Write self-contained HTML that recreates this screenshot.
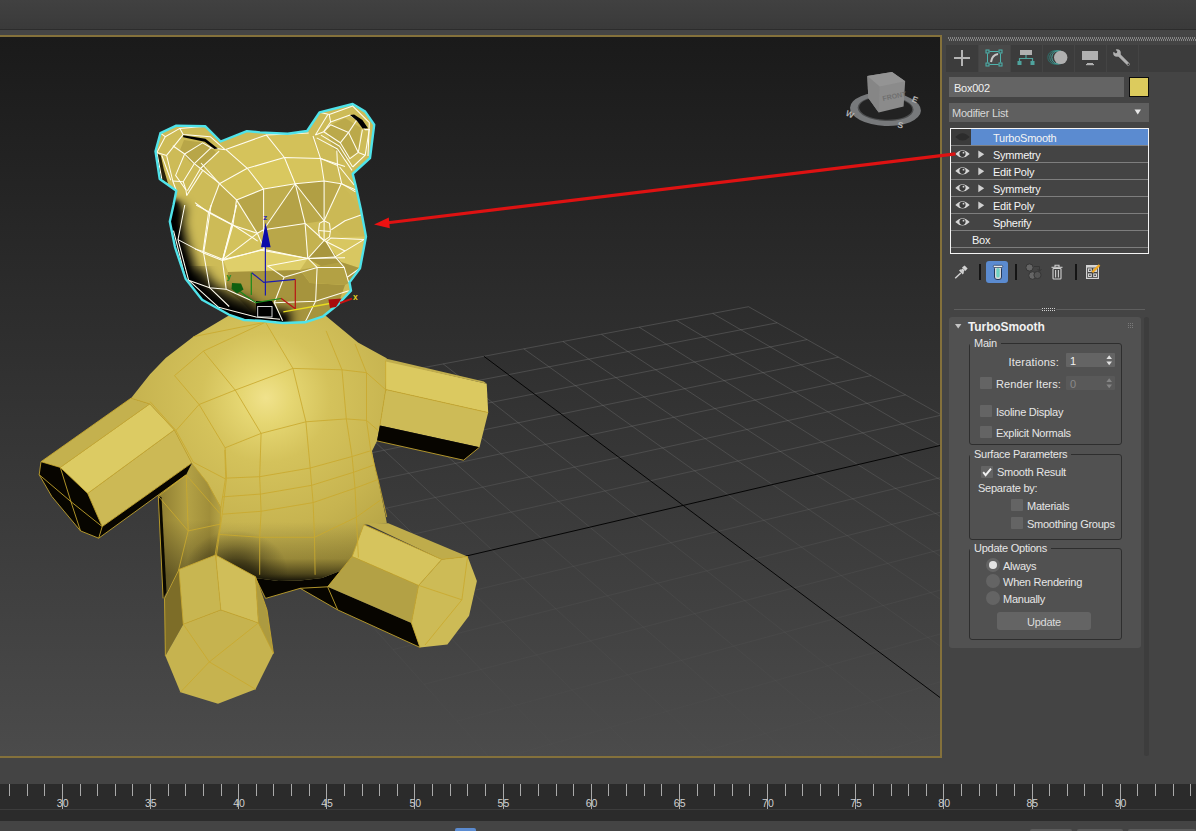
<!DOCTYPE html>
<html><head><meta charset="utf-8"><title>3ds Max</title>
<style>
html,body{margin:0;padding:0;overflow:hidden}
body{width:1196px;height:831px;overflow:hidden;background:#444444;position:relative;font-family:"Liberation Sans",sans-serif;font-size:11px;color:#e6e6e6}
.a{position:absolute}

.t{position:absolute;white-space:nowrap;line-height:13px;height:13px;margin-top:1px;letter-spacing:-0.25px}
.cb{position:absolute;width:12px;height:12px;background:#646464;border-radius:1px}
.rb{position:absolute;width:14px;height:14px;background:#646464;border-radius:7px}
.gb{position:absolute;border:1px solid #2e2e2e;border-radius:3px;box-sizing:border-box}
.gl{position:absolute;background:#515151;padding:0 4px 0 4px;line-height:13px;height:13px;white-space:nowrap;margin-top:1px;letter-spacing:-0.25px}
.row{position:absolute;left:951px;width:197px;height:16px;border-bottom:1px solid #7c7c7c}
.sep{position:absolute;width:1.5px;height:16px;background:#141414}

</style></head><body>
<div class="a" style="left:0;top:0;width:1196px;height:29px;background:linear-gradient(#414141,#3a3a3a)"></div>
<div class="a" style="left:0;top:29px;width:1196px;height:1px;background:#2c2c2c"></div>
<div class="a" style="left:0;top:30px;width:1196px;height:5px;background:#454545"></div>
<div class="a" style="left:0;top:35px;width:942px;height:723px;background:#84713b"></div>
<svg class="a" style="left:0;top:37px" width="940" height="719" viewBox="0 37 940 719">
<defs>
<linearGradient id="vbg" x1="0" y1="0" x2="0" y2="1"><stop offset="0" stop-color="#1a1a1a"/><stop offset="1" stop-color="#4b4b4b"/></linearGradient>
<linearGradient id="gridfade" gradientUnits="userSpaceOnUse" x1="0" y1="300" x2="0" y2="720"><stop offset="0" stop-color="#8a8a8a" stop-opacity="0.33"/><stop offset="0.36" stop-color="#8a8a8a" stop-opacity="0.26"/><stop offset="0.62" stop-color="#8a8a8a" stop-opacity="0.11"/><stop offset="1" stop-color="#8a8a8a" stop-opacity="0.02"/></linearGradient>

<radialGradient id="torso" gradientUnits="userSpaceOnUse" cx="266" cy="398" r="215">
<stop offset="0" stop-color="#f0e28c"/><stop offset="0.12" stop-color="#e5d672"/><stop offset="0.3" stop-color="#d4c25b"/><stop offset="0.6" stop-color="#c7b450"/><stop offset="0.85" stop-color="#b5a345"/><stop offset="1" stop-color="#938236"/></radialGradient>
<linearGradient id="tshade" gradientUnits="userSpaceOnUse" x1="0" y1="522" x2="0" y2="583">
<stop offset="0" stop-color="#000" stop-opacity="0"/><stop offset="0.6" stop-color="#1a1400" stop-opacity="0.22"/><stop offset="0.85" stop-color="#0a0800" stop-opacity="0.6"/><stop offset="1" stop-color="#000" stop-opacity="0.97"/></linearGradient>
<linearGradient id="sideL" gradientUnits="userSpaceOnUse" x1="160" y1="0" x2="222" y2="0">
<stop offset="0" stop-color="#8f7e32"/><stop offset="0.45" stop-color="#b3a145"/><stop offset="0.8" stop-color="#a08e3a"/><stop offset="1" stop-color="#b8a648"/></linearGradient>
<linearGradient id="sideL2" gradientUnits="userSpaceOnUse" x1="0" y1="520" x2="0" y2="575">
<stop offset="0" stop-color="#000" stop-opacity="0"/><stop offset="1" stop-color="#000" stop-opacity="0.35"/></linearGradient>
<linearGradient id="headsh" gradientUnits="userSpaceOnUse" x1="232" y1="246" x2="196" y2="282">
<stop offset="0" stop-color="#000" stop-opacity="0"/><stop offset="0.45" stop-color="#000" stop-opacity="0.55"/><stop offset="0.75" stop-color="#000" stop-opacity="1"/><stop offset="1" stop-color="#000" stop-opacity="1"/></linearGradient>
<radialGradient id="legsh" gradientUnits="userSpaceOnUse" cx="236" cy="572" r="52" gradientTransform="translate(236 572) scale(1 0.8) translate(-236 -572)">
<stop offset="0" stop-color="#000" stop-opacity="0.62"/><stop offset="0.3" stop-color="#000" stop-opacity="0.5"/><stop offset="0.65" stop-color="#000" stop-opacity="0.22"/><stop offset="1" stop-color="#000" stop-opacity="0"/></radialGradient>
<filter id="blur5" x="-30%" y="-30%" width="160%" height="160%"><feGaussianBlur stdDeviation="5.5"/></filter><filter id="blur3" x="-30%" y="-30%" width="160%" height="160%"><feGaussianBlur stdDeviation="2.5"/></filter>
<clipPath id="headclip"><polygon points="160.4,133.2 176.3,125.6 205.4,126.3 220.6,141.5 246.9,131.1 260.0,132.4 287.7,133.8 307.1,131.0 319.5,112.3 352.7,104.0 365.2,111.6 374.2,124.8 370.0,158.0 352.7,173.9 355.5,185.0 361.0,210.0 366.0,236.6 360.0,268.2 349.5,282.4 351.0,290.7 338.2,304.2 323.2,316.3 305.1,322.3 282.6,323.0 260.0,320.8 244.2,320.0 229.2,314.8 202.1,299.7 185.6,278.7 175.0,247.1 169.8,221.5 173.5,205.0 176.3,190.7 159.7,178.9 155.5,151.2"/></clipPath>

</defs>
<rect x="0" y="37" width="940" height="719" fill="url(#vbg)"/>
<g stroke="url(#gridfade)" stroke-width="1" fill="none"><line x1="181.8" y1="412.9" x2="570.5" y2="848.3"/><line x1="181.8" y1="412.9" x2="748.5" y2="306.7"/><line x1="227.5" y1="404.4" x2="633.4" y2="828.9"/><line x1="200.6" y1="434.0" x2="777.2" y2="322.8"/><line x1="272.4" y1="396.0" x2="694.5" y2="810.0"/><line x1="220.4" y1="456.2" x2="807.2" y2="339.6"/><line x1="316.3" y1="387.7" x2="753.8" y2="791.6"/><line x1="241.2" y1="479.5" x2="838.5" y2="357.2"/><line x1="359.5" y1="379.6" x2="811.4" y2="773.8"/><line x1="263.1" y1="504.0" x2="871.2" y2="375.6"/><line x1="401.7" y1="371.7" x2="867.3" y2="756.5"/><line x1="286.2" y1="530.0" x2="905.6" y2="394.9"/><line x1="443.2" y1="363.9" x2="921.7" y2="739.7"/><line x1="310.7" y1="557.3" x2="941.5" y2="415.1"/><line x1="523.8" y1="348.8" x2="1026.0" y2="707.5"/><line x1="364.0" y1="617.0" x2="1019.0" y2="458.6"/><line x1="563.0" y1="341.5" x2="1076.0" y2="692.0"/><line x1="393.1" y1="649.6" x2="1060.8" y2="482.0"/><line x1="601.5" y1="334.3" x2="1124.8" y2="676.9"/><line x1="424.0" y1="684.3" x2="1104.8" y2="506.8"/><line x1="639.2" y1="327.2" x2="1172.2" y2="662.3"/><line x1="457.0" y1="721.2" x2="1151.2" y2="532.8"/><line x1="676.3" y1="320.2" x2="1218.4" y2="648.0"/><line x1="492.3" y1="760.7" x2="1200.3" y2="560.4"/><line x1="712.7" y1="313.4" x2="1263.4" y2="634.1"/><line x1="530.0" y1="803.0" x2="1252.2" y2="589.6"/><line x1="748.5" y1="306.7" x2="1307.3" y2="620.5"/><line x1="570.5" y1="848.3" x2="1307.3" y2="620.5"/></g><g stroke="#050505" stroke-width="1" fill="none"><line x1="483.9" y1="356.3" x2="974.6" y2="723.4"/><line x1="336.5" y1="586.3" x2="979.3" y2="436.3"/></g>
<polygon points="215.6,555.0 255.5,578.0 278.6,581.0 300.0,580.5 322.0,578.0 340.0,571.0 352.2,556.5 327.6,586.8 300.2,588.3 265.6,598.4 255.5,578.0" fill="#060400" /><polygon points="158.3,496.2 186.2,473.0 192.0,463.5 207.4,482.8 221.0,507.8 220.0,525.0 215.1,555.0 232.0,566.0 255.5,578.0 215.6,555.0 179.0,569.5 163.1,598.4" fill="url(#sideL)" /><polygon points="158.3,496.2 186.2,473.0 192.0,463.5 207.4,482.8 221.0,507.8 220.0,525.0 215.1,555.0 232.0,566.0 255.5,578.0 215.6,555.0 179.0,569.5 163.1,598.4" fill="url(#sideL2)" /><polygon points="158.3,496.2 161.5,497.0 166.5,592.0 163.1,598.4" fill="#0a0800" /><polygon points="228.0,316.0 326.0,316.0 358.0,342.5 386.7,358.3 385.7,389.5 379.9,425.6 377.0,441.0 372.0,451.0 375.6,470.3 378.0,479.5 385.7,517.0 386.8,523.3 363.7,524.7 352.2,556.5 340.0,571.0 322.0,578.0 300.0,580.5 278.6,581.0 255.5,578.0 232.0,566.0 215.1,555.0 220.0,525.0 221.0,507.8 207.4,482.8 192.0,463.5 174.3,429.9 149.8,403.9 131.0,398.2 150.0,374.2 165.7,358.0 193.3,336.7" fill="url(#torso)" /><polygon points="228.0,316.0 326.0,316.0 358.0,342.5 386.7,358.3 385.7,389.5 379.9,425.6 377.0,441.0 372.0,451.0 375.6,470.3 378.0,479.5 385.7,517.0 386.8,523.3 363.7,524.7 352.2,556.5 340.0,571.0 322.0,578.0 300.0,580.5 278.6,581.0 255.5,578.0 232.0,566.0 215.1,555.0 220.0,525.0 221.0,507.8 207.4,482.8 192.0,463.5 174.3,429.9 149.8,403.9 131.0,398.2 150.0,374.2 165.7,358.0 193.3,336.7" fill="url(#tshade)" /><polygon points="228.0,316.0 326.0,316.0 358.0,342.5 386.7,358.3 385.7,389.5 379.9,425.6 377.0,441.0 372.0,451.0 375.6,470.3 378.0,479.5 385.7,517.0 386.8,523.3 363.7,524.7 352.2,556.5 340.0,571.0 322.0,578.0 300.0,580.5 278.6,581.0 255.5,578.0 232.0,566.0 215.1,555.0 220.0,525.0 221.0,507.8 207.4,482.8 192.0,463.5 174.3,429.9 149.8,403.9 131.0,398.2 150.0,374.2 165.7,358.0 193.3,336.7" fill="url(#legsh)" /><polygon points="158.3,496.2 186.2,473.0 192.0,463.5 207.4,482.8 221.0,507.8 220.0,525.0 215.1,555.0 232.0,566.0 255.5,578.0 215.6,555.0 179.0,569.5 163.1,598.4" fill="url(#legsh)" /><polygon points="131.0,398.2 149.8,403.9 60.3,467.4 41.0,461.7" fill="#c4b14e" /><polygon points="149.8,403.9 174.3,429.9 87.7,493.4 60.3,467.4" fill="#dccb63" /><polygon points="174.3,429.9 191.7,463.1 102.2,526.6 87.7,493.4" fill="#ccb955" /><polygon points="191.7,463.1 186.2,474.7 98.7,538.2 102.2,526.6" fill="#070500" /><polygon points="41.0,461.7 60.3,467.4 87.7,493.4 102.2,526.6 98.7,538.2 80.5,530.9 51.7,496.3 39.2,474.7" fill="#070500" /><polygon points="385.7,360.6 486.7,383.7 488.2,412.6 385.7,389.5" fill="#dbc960" /><polygon points="385.7,358.6 483.8,381.6 486.7,383.7 385.7,361.5" fill="#c0ad4c" /><polygon points="385.7,389.5 488.2,412.6 479.5,447.2 379.9,425.6" fill="#cdbb57" /><polygon points="379.9,425.6 479.5,447.2 463.6,460.2 377.0,440.9" fill="#070500" /><polygon points="179.0,569.5 164.5,598.4 165.4,656.1 183.3,624.3" fill="#7d6d28" /><polygon points="179.0,569.5 215.6,555.0 220.8,609.9 183.3,624.3" fill="#c8b651" /><polygon points="215.6,555.0 255.5,576.7 258.4,622.9 220.8,609.9" fill="#d0be59" /><polygon points="255.5,576.7 267.0,609.9 273.4,653.2 258.4,622.9" fill="#ac9a40" /><polygon points="183.3,624.3 220.8,609.9 258.4,622.9 273.4,653.2 255.5,689.3 218.0,703.7 180.4,692.2 165.4,656.1" fill="#c6b34f" /><polygon points="300.2,588.3 327.6,586.8 411.4,622.9 420.0,647.4 337.7,609.9" fill="#070500" /><polygon points="365.2,523.3 388.3,523.3 467.6,556.5 441.7,559.4" fill="#bfac4b" /><polygon points="363.7,524.7 441.7,559.4 418.6,585.4 352.2,556.5" fill="#d6c45d" /><polygon points="352.2,556.5 418.6,585.4 411.4,622.9 327.6,586.8" fill="#b3a145" /><polygon points="441.7,559.4 467.6,556.5 476.9,581.0 469.1,615.7 447.4,644.5 420.0,647.4 411.4,622.9 418.6,585.4" fill="#cdbb56" /><g stroke="#c9a92f" stroke-width="0.9" fill="none" stroke-linejoin="round" opacity="0.95"><polyline points="131.0,398.2 41.0,461.7 39.2,474.7 51.7,496.3 80.5,530.9 98.7,538.2 186.2,474.7" /><polyline points="149.8,403.9 60.3,467.4" /><polyline points="174.3,429.9 87.7,493.4" /><polyline points="191.7,463.1 102.2,526.6" /><polyline points="41.0,461.7 60.3,467.4 87.7,493.4 102.2,526.6 98.7,538.2" /><polyline points="60.3,467.4 70.9,501.6 80.5,530.9" /><polyline points="39.2,474.7 70.9,501.6 102.2,526.6" /><polyline points="131.0,398.2 149.8,403.9 174.3,429.9 191.7,463.1" /><polyline points="385.7,389.5 488.2,412.6" /><polyline points="377.0,440.9 463.6,460.2 479.5,447.2" /><polyline points="385.7,360.6 385.7,389.5 379.9,425.6" /><polyline points="179.0,569.5 215.6,555.0 255.5,576.7 267.0,609.9 273.4,653.2" /><polyline points="179.0,569.5 183.3,624.3" /><polyline points="215.6,555.0 220.8,609.9" /><polyline points="255.5,576.7 258.4,622.9" /><polyline points="183.3,624.3 220.8,609.9 258.4,622.9 273.4,653.2" /><polyline points="183.3,624.3 209.3,661.9 258.4,622.9" /><polyline points="209.3,661.9 180.4,692.2" /><polyline points="209.3,661.9 255.5,689.3" /><polyline points="164.5,598.4 165.4,656.1" /><polyline points="164.5,598.4 179.0,569.5" /><polyline points="158.3,496.2 163.1,598.4" /><polyline points="363.7,524.7 441.7,559.4 467.6,556.5" /><polyline points="352.2,556.5 418.6,585.4 461.9,599.8 467.6,556.5" /><polyline points="441.7,559.4 418.6,585.4 411.4,622.9 420.0,647.4" /><polyline points="461.9,599.8 425.0,645.0" /><polyline points="300.2,588.3 337.7,609.9 420.0,647.4" /><polyline points="327.6,586.8 337.7,609.9" /><polyline points="363.7,524.7 352.2,556.5 327.6,586.8 300.2,588.3 265.6,598.4 255.5,578.0" /><polyline points="265.5,322.2 292.9,368.4 305.9,421.8 310.2,468.0 313.1,502.6 314.5,537.3 315.1,574.8" /><polyline points="326.1,330.9 342.0,369.8 346.3,418.9 352.1,456.5 355.0,488.2 356.4,517.1 358.4,557.5" /><polyline points="355.0,343.9 366.5,372.7 366.5,420.4 370.8,450.7" /><polyline points="203.4,351.1 235.2,390.1 261.1,433.4 259.7,476.7 261.1,511.3 259.7,537.3 259.7,574.8" /><polyline points="174.5,375.6 199.1,404.5 225.1,447.8 226.5,478.1 222.2,514.2 219.3,534.4 215.8,560.4" /><polyline points="150.0,401.6 176.0,430.5 193.3,462.2 225.6,479.0" /><polyline points="193.3,336.7 265.5,322.2" /><polyline points="174.5,375.6 203.4,351.1 265.5,322.2" /><polyline points="176.0,430.5 199.1,404.5 235.2,390.1 292.9,368.4 342.0,369.8 366.5,372.7 386.7,390.6" /><polyline points="225.1,447.8 261.1,433.4 305.9,421.8 346.3,418.9 366.5,420.4" /><polyline points="226.5,478.1 259.7,476.7 310.2,468.0 352.1,456.5 370.8,450.7" /><polyline points="222.2,496.9 261.1,494.0 311.7,485.3 353.5,472.3 373.7,465.1" /><polyline points="222.2,514.2 261.1,511.3 313.1,502.6 355.0,488.2 378.1,479.5" /><polyline points="219.3,534.4 259.7,537.3 314.5,537.3 356.4,517.1 380.9,499.8" /><polyline points="366.5,420.4 378.1,430.5" /><polyline points="370.8,450.7 378.1,479.5 386.7,517.1" /><polyline points="158.3,496.2 186.2,475.0 188.2,530.9 158.3,496.2" /><polyline points="188.2,530.9 220.0,524.2" /><polyline points="188.2,530.9 178.5,570.4" /><polyline points="186.2,475.0 220.0,513.6" /><polyline points="192.0,463.5 207.4,482.8 220.9,507.8 220.0,525.1 215.1,555.0" /><polyline points="224.8,450.0 225.7,477.0 220.9,507.8" /></g><polygon points="160.4,133.2 176.3,125.6 205.4,126.3 220.6,141.5 246.9,131.1 260.0,132.4 287.7,133.8 307.1,131.0 319.5,112.3 352.7,104.0 365.2,111.6 374.2,124.8 370.0,158.0 352.7,173.9 355.5,185.0 361.0,210.0 366.0,236.6 360.0,268.2 349.5,282.4 351.0,290.7 338.2,304.2 323.2,316.3 305.1,322.3 282.6,323.0 260.0,320.8 244.2,320.0 229.2,314.8 202.1,299.7 185.6,278.7 175.0,247.1 169.8,221.5 173.5,205.0 176.3,190.7 159.7,178.9 155.5,151.2" fill="#cdbb57" /><g clip-path="url(#headclip)"><polygon points="225.7,149.4 266.3,134.9 284.4,157.5 247.3,168.3" fill="#d5c35b" /><polygon points="266.3,134.9 308.7,133.1 320.5,158.4 284.4,157.5" fill="#d3c159" /><polygon points="247.3,168.3 284.4,157.5 295.2,183.7 263.6,189.1" fill="#d9c85f" /><polygon points="284.4,157.5 320.5,158.4 324.1,181.0 295.2,183.7" fill="#d6c45c" /><polygon points="219.4,183.7 247.3,168.3 263.6,189.1 236.5,199.9" fill="#d2c058" /><polygon points="236.5,199.9 263.6,189.1 263.6,229.7 257.3,233.3" fill="#b7a548" /><polygon points="263.6,189.1 295.2,183.7 263.6,229.7" fill="#bfad4d" /><polygon points="295.2,183.7 305.1,223.4 263.6,229.7" fill="#b4a246" /><polygon points="295.2,183.7 324.1,220.7 305.1,223.4" fill="#baa84a" /><polygon points="295.2,183.7 324.1,181.0 324.1,220.7" fill="#b19f44" /><polygon points="324.1,181.0 341.2,183.7 324.1,220.7" fill="#bca94b" /><polygon points="208.5,212.5 219.4,183.7 236.5,199.9 232.9,225.2" fill="#c3b04f" /><polygon points="236.5,199.9 257.3,233.3 232.9,225.2" fill="#c9b754" /><polygon points="232.9,225.2 257.3,233.3 264.5,249.5 223.0,259.5" fill="#d3c25c" /><polygon points="263.6,229.7 305.1,223.4 307.8,258.6 264.5,249.5" fill="#b9a749" /><polygon points="305.1,223.4 324.1,240.5 307.8,258.6" fill="#c4b250" /><polygon points="223.0,259.5 264.5,249.5 307.8,258.6 300.0,270.0 228.0,272.0" fill="#dfcf6a" /><polygon points="341.2,183.7 358.0,205.0 366.0,236.6 345.0,236.9 324.1,220.7" fill="#cbb955" /><polygon points="345.0,236.9 366.0,236.6 360.0,268.2 341.0,262.0 324.1,240.5" fill="#d8c761" /><polygon points="324.1,240.5 341.0,262.0 360.0,268.2 349.5,282.4 307.8,258.6" fill="#a8963e" /><polygon points="228.0,272.0 300.0,270.0 310.0,283.0 345.0,285.0 338.2,304.2 323.2,316.3 305.1,322.3 282.6,323.0 260.0,320.8 240.0,300.0 226.0,290.0" fill="#a6943d" /><polygon points="300.0,270.0 341.0,262.0 349.5,282.4 345.0,285.0 310.0,283.0" fill="#b3a144" /><polygon points="184.0,140.0 205.0,143.0 216.0,152.0 203.0,170.0 190.0,162.0 180.0,150.0" fill="#b8a648" /><polygon points="156.5,153.0 159.7,178.9 168.0,183.5 163.8,169.2 160.8,155.4" fill="#2a2208" /><polygon points="325.0,128.0 345.0,118.0 361.0,128.0 358.0,152.0 345.0,160.0 333.0,148.0" fill="#bba94a" /><g filter="url(#blur5)"><polyline points="171.0,203.0 168.0,221.5 173.0,247.1 183.0,279.0 200.0,301.0 228.0,316.5 244.2,322.0 290.0,325.0" stroke="#000" stroke-width="30" fill="none" stroke-linejoin="round"/></g><g filter="url(#blur3)"><polyline points="171.0,200.0 168.0,221.5 173.0,247.1 183.0,279.0 200.0,301.0 228.0,316.5 244.2,322.0 285.0,325.0" stroke="#000" stroke-width="17" fill="none" stroke-linejoin="round"/></g><g filter="url(#blur5)" opacity="0.7"><polyline points="183.0,279.0 200.0,301.0 228.0,316.5 250.0,322.0" stroke="#000" stroke-width="46" fill="none" stroke-linejoin="round"/></g></g><polygon points="256.0,301.0 272.0,301.0 282.6,320.8 256.0,319.0" fill="#000" clip-path="url(#headclip)"/><g stroke="#fffdf0" stroke-width="1.05" fill="none" stroke-linejoin="round" clip-path="url(#headclip)"><polyline points="225.7,149.4 247.3,168.3 263.6,189.1" /><polyline points="266.3,134.9 284.4,157.5 295.2,183.7" /><polyline points="313.0,136.0 320.5,158.4 324.1,181.0" /><polyline points="225.7,149.4 266.3,134.9 308.7,133.1" /><polyline points="247.3,168.3 284.4,157.5 320.5,158.4 345.0,166.5" /><polyline points="201.0,163.0 219.4,183.7 247.3,168.3" /><polyline points="219.4,183.7 236.5,199.9 263.6,189.1 295.2,183.7 324.1,181.0 341.2,183.7 356.0,190.0" /><polyline points="208.5,212.5 219.4,183.7" /><polyline points="195.0,202.6 208.5,212.5 232.9,225.2" /><polyline points="236.5,199.9 232.9,225.2" /><polyline points="236.5,199.9 257.3,233.3" /><polyline points="263.6,189.1 263.6,229.7" /><polyline points="295.2,183.7 263.6,229.7" /><polyline points="295.2,183.7 305.1,223.4" /><polyline points="295.2,183.7 324.1,220.7" /><polyline points="324.1,181.0 324.1,220.7" /><polyline points="341.2,183.7 324.1,220.7" /><polyline points="305.1,223.4 263.6,229.7" /><polyline points="305.1,223.4 307.8,258.6" /><polyline points="232.9,225.2 257.3,233.3" /><polyline points="232.9,225.2 223.0,259.5" /><polyline points="208.5,212.5 203.1,251.4" /><polyline points="195.0,249.0 203.1,251.4 223.0,259.5" /><polyline points="223.0,259.5 257.3,233.3" /><polyline points="223.0,259.5 264.5,249.5 307.8,258.6" /><polyline points="324.1,240.5 307.8,258.6" /><polyline points="305.1,223.4 324.1,240.5" /><polyline points="307.8,258.6 345.0,257.7" /><polyline points="324.1,240.5 345.0,251.0" /><polyline points="331.3,229.7 345.0,220.7 361.0,215.0" /><polyline points="257.3,233.3 263.6,229.7 264.5,249.5 257.3,233.3" /><polyline points="319.5,223.4 324.1,220.7 329.5,223.4 330.4,231.5 329.5,236.9 324.1,240.5 319.5,236.9 318.6,230.6 319.5,223.4" /><polyline points="324.1,220.7 324.1,240.5" /><polyline points="318.6,230.6 330.4,231.5" /><polyline points="308.1,258.4 317.1,267.4 344.2,267.4 335.2,256.9 308.1,258.4" /><polyline points="317.1,267.4 315.6,301.2 305.1,322.3" /><polyline points="344.2,267.4 348.7,282.4" /><polyline points="335.2,256.9 363.8,239.6 330.7,238.1 326.2,241.8 335.2,256.9" /><polyline points="348.7,290.7 315.6,301.2 274.3,302.7 282.6,320.8" /><polyline points="284.1,277.2 317.1,267.4" /><polyline points="284.1,277.2 274.3,302.7" /><polyline points="267.5,265.9 284.1,277.2" /><polyline points="267.5,265.9 308.1,258.4" /><polyline points="260.0,250.1 308.1,258.4" /><polyline points="347.2,277.2 360.0,268.2" /><polyline points="184.8,205.0 178.0,239.6 188.6,280.2 218.6,307.3 256.2,317.0 280.0,319.3" /><polyline points="211.1,205.0 203.6,253.1 209.6,287.7 229.2,306.5" /><polyline points="236.7,205.0 222.4,260.6 226.2,289.2 256.2,302.7" /><polyline points="178.0,239.6 203.6,253.1 222.4,260.6 265.3,248.6" /><polyline points="188.6,280.2 209.6,287.7 226.2,289.2" /><polyline points="196.1,205.0 232.2,224.5 257.7,241.1" /><polyline points="232.2,224.5 222.4,260.6" /><polyline points="173.5,230.6 185.6,278.7" /><polyline points="160.4,133.2 165.2,136.7 179.8,128.4 205.4,126.3" /><polyline points="165.2,136.7 156.9,152.6 161.8,178.9" /><polyline points="179.8,128.4 183.2,134.6 210.2,136.7 225.4,149.8" /><polyline points="183.2,134.6 166.6,155.4 172.8,181.0 176.3,190.7" /><polyline points="156.9,152.6 166.6,155.4" /><polyline points="172.8,145.7 184.6,154.0 194.3,163.7 200.5,168.5 219.9,183.7" /><polyline points="184.6,154.0 202.6,142.9 210.9,147.8" /><polyline points="184.6,154.0 175.6,175.4 186.0,190.0" /><polyline points="194.3,163.7 210.9,147.8 225.4,149.8" /><polyline points="194.3,163.7 183.2,181.7 186.0,190.0 186.7,195.5" /><polyline points="200.5,168.5 219.2,151.2" /><polyline points="200.5,168.5 187.4,190.7" /><polyline points="202.6,170.6 186.7,195.5" /><polyline points="172.8,181.0 183.2,181.7" /><polyline points="161.8,155.4 170.8,180.3" /><polyline points="319.5,112.3 329.2,114.4 352.7,106.1 352.7,104.0" /><polyline points="329.2,114.4 330.6,122.0 350.0,115.1 356.9,119.9 365.2,129.6 370.0,129.6" /><polyline points="352.7,106.1 369.3,122.7 368.0,155.9" /><polyline points="330.6,122.0 323.7,131.7 315.4,135.1" /><polyline points="327.8,114.4 315.4,135.1" /><polyline points="323.7,131.7 340.3,142.8 348.6,132.4 330.6,124.8 323.7,131.7" /><polyline points="348.6,132.4 356.9,119.9" /><polyline points="348.6,132.4 358.3,152.4 350.0,158.7 340.3,142.8" /><polyline points="358.3,152.4 362.4,129.6" /><polyline points="358.3,152.4 365.2,155.2 352.7,167.0" /><polyline points="365.2,155.2 369.3,129.6" /><polyline points="316.7,137.9 337.5,149.0 352.0,170.4" /><polyline points="320.9,135.1 339.6,146.2 352.7,167.0" /><polyline points="336.8,150.4 337.5,165.6 341.7,183.6" /><polyline points="337.5,165.6 319.5,158.0" /><polyline points="341.7,183.6 355.5,191.9" /><polyline points="339.6,167.0 354.1,185.0" /></g><polygon points="183.2,135.3 205.4,138.8 217.8,148.4 214.4,148.9 204.7,141.7 183.2,137.3" fill="#000" /><polygon points="350.0,115.1 354.1,114.4 362.4,119.9 368.0,128.2 362.6,128.4 356.9,120.8" fill="#000" /><polygon points="160.4,133.2 176.3,125.6 205.4,126.3 220.6,141.5 246.9,131.1 260.0,132.4 287.7,133.8 307.1,131.0 319.5,112.3 352.7,104.0 365.2,111.6 374.2,124.8 370.0,158.0 352.7,173.9 355.5,185.0 361.0,210.0 366.0,236.6 360.0,268.2 349.5,282.4 351.0,290.7 338.2,304.2 323.2,316.3 305.1,322.3 282.6,323.0 260.0,320.8 244.2,320.0 229.2,314.8 202.1,299.7 185.6,278.7 175.0,247.1 169.8,221.5 173.5,205.0 176.3,190.7 159.7,178.9 155.5,151.2" fill="none" stroke="#4fe3ea" stroke-width="2.4" stroke-linejoin="round"/><g fill="none" stroke-width="1.2">
<line x1="265.4" y1="246" x2="265.4" y2="295.5" stroke="#1c1cb0"/>
<polygon points="265.6,222.5 270.6,247.2 261,247.2" fill="#0c0caa" stroke="none"/>
<polyline points="251.7,272.7 263.8,282.4 295.3,279.4" stroke="#1c1cb0"/>
<line x1="251.3" y1="272.7" x2="251.3" y2="295" stroke="#1a8a1a"/>
<polyline points="234,287 246,296 256,302.7 281,298.5" stroke="#1a8a1a"/>
<polygon points="232,283 241,283.5 243.5,289.5 237,293.5 231.5,289" fill="#106010" stroke="none"/>
<polyline points="295.3,279.4 295.3,308.8 281,298.2" stroke="#b81414"/>
<line x1="283.3" y1="311.8" x2="330" y2="303.5" stroke="#e8dc20" stroke-width="1.3"/>
<polygon points="328.4,299.6 341.5,298.6 336,307 330,308" fill="#a80c0c" stroke="none"/>
<line x1="340" y1="303" x2="352" y2="298.6" stroke="#c81010" stroke-width="2"/>
<rect x="257.7" y="306.5" width="14.3" height="10.5" stroke="#e8e8e8" stroke-width="0.9"/>
</g>
<text x="263.3" y="220" font-size="8" font-weight="bold" font-family="Liberation Sans" fill="#2a2ab8">z</text>
<text x="226.5" y="279" font-size="8" font-weight="bold" font-family="Liberation Sans" fill="#1a8a1a">y</text>
<text x="353" y="299.5" font-size="8.5" font-weight="bold" font-family="Liberation Sans" fill="#e0d020">x</text>
<g>
<ellipse cx="885.5" cy="109.2" rx="35.5" ry="16.8" fill="#77797b" transform="rotate(2.5 885.5 109)"/>
<ellipse cx="885.6" cy="108.6" rx="28" ry="12.4" fill="#4c4d4e" transform="rotate(2.5 885.5 109)"/>
<ellipse cx="885.6" cy="108.4" rx="26.6" ry="11.4" fill="#222222" transform="rotate(2.5 885.5 109)"/>
<polygon points="867.3,75.9 892,72 905.2,81.3 903.6,106.6 878.7,112.6 868.3,98.1" fill="#8b8b8b"/>
<polygon points="867.3,75.9 892,72 905.2,81.3 879.5,86.5" fill="#949494"/>
<polygon points="867.3,75.9 879.5,86.5 878.7,112.6 868.3,98.1" fill="#868686"/>
<text x="883" y="101" font-size="7" font-family="Liberation Sans" font-weight="bold" fill="#707070" transform="rotate(-12 883 101)">FRONT</text>
<text x="846.5" y="117.5" font-size="8.5" font-family="Liberation Sans" font-weight="bold" fill="#b4b4b4" transform="rotate(24 851 113)">W</text>
<text x="912" y="103" font-size="8.5" font-family="Liberation Sans" font-weight="bold" fill="#b4b4b4" transform="rotate(22 916 100)">E</text>
<text x="898" y="128" font-size="8.5" font-family="Liberation Sans" font-weight="bold" fill="#b4b4b4" transform="rotate(14 901 124)">S</text>
</g>
</svg>
<svg class="a" style="left:948px;top:37px" width="248" height="4"><defs><pattern id="dg" width="2" height="4" patternUnits="userSpaceOnUse"><rect x="0" y="0.5" width="1" height="1" fill="#c4c4c4"/><rect x="1" y="2.5" width="1" height="1" fill="#c4c4c4"/></pattern></defs><rect width="248" height="4" fill="url(#dg)"/></svg>
<div class="a" style="left:946px;top:45px;width:250px;height:27px;background:#3c3c3c"></div>
<div class="a" style="left:979px;top:45px;width:31px;height:27px;background:#494949"></div>
<div class="a" style="left:978px;top:45px;width:1px;height:27px;background:#444"></div>
<div class="a" style="left:1010px;top:45px;width:1px;height:27px;background:#444"></div>
<div class="a" style="left:1042px;top:45px;width:1px;height:27px;background:#444"></div>
<div class="a" style="left:1074px;top:45px;width:1px;height:27px;background:#444"></div>
<div class="a" style="left:1106px;top:45px;width:1px;height:27px;background:#444"></div>
<div class="a" style="left:1138px;top:45px;width:1px;height:27px;background:#444"></div>
<svg class="a" style="left:946px;top:45px" width="200" height="27">
<g stroke="#b4b4b4" stroke-width="2" fill="none"><line x1="8" y1="13" x2="24" y2="13"/><line x1="16" y1="5" x2="16" y2="21"/></g>
<g stroke="#4fb3ad" stroke-width="1" fill="none">
<rect x="41.5" y="6.5" width="13" height="13" stroke-dasharray="9 4" stroke-dashoffset="-2"/>
<rect x="40" y="5" width="3" height="3" fill="#3f4f4f"/><rect x="53" y="5" width="3" height="3" fill="#3f4f4f"/><rect x="40" y="18" width="3" height="3" fill="#3f4f4f"/><rect x="53" y="18" width="3" height="3" fill="#3f4f4f"/></g>
<path d="M45,17 Q46,10 52,9" stroke="#c8c8c8" stroke-width="2" fill="none"/>
<g fill="#b0b0b0"><rect x="74" y="5" width="12" height="5"/></g>
<g stroke="#4fa39d" stroke-width="1.2" fill="none"><path d="M80,10 V13 M73.5,17 V13.5 H86.5 V17"/></g>
<g fill="#4fa39d"><rect x="71.5" y="16" width="4" height="4"/><rect x="84.5" y="16" width="4" height="4"/></g>
<g fill="none" stroke-width="1"><circle cx="108.5" cy="12.4" r="6.7" stroke="#2f6f6a"/><circle cx="110.5" cy="12.4" r="6.7" stroke="#3a8a84"/><circle cx="112.5" cy="12.4" r="6.7" stroke="#46a59e"/></g>
<circle cx="114.7" cy="12.4" r="6.7" fill="#b0b0b0"/>
<rect x="136" y="6" width="16" height="9" fill="#b0b0b0"/><rect x="141" y="18" width="6" height="1.2" fill="#b0b0b0"/><rect x="140" y="19" width="8" height="1.2" fill="#b0b0b0"/>
<line x1="172.6" y1="9.6" x2="182.3" y2="19.2" stroke="#b0b0b0" stroke-width="3" stroke-linecap="round"/>
<circle cx="171" cy="8" r="3.8" fill="#b0b0b0"/>
<polygon points="171.2,8.2 166.2,6.4 169.4,3.2" fill="#3c3c3c" transform="rotate(0)"/>
<rect x="-1.2" y="-5" width="2.4" height="5" fill="#3c3c3c" transform="translate(170.6 7.6) rotate(-45)"/>
<circle cx="182.4" cy="19.4" r="0.9" fill="#3c3c3c"/>
</svg>
<div class="a" style="left:949px;top:77px;width:175px;height:20px;background:#646464"></div>
<div class="t" style="left:954px;top:81px;color:#f0f0f0">Box002</div>
<div class="a" style="left:1129px;top:77px;width:20px;height:20px;background:#0c0c0c"></div>
<div class="a" style="left:1130px;top:78px;width:18px;height:18px;background:#dccb5d"></div>
<div class="a" style="left:949px;top:103px;width:200px;height:19px;background:#5f5f5f"></div>
<div class="t" style="left:952px;top:106px;color:#d8d8d8">Modifier List</div>
<svg class="a" style="left:1134px;top:109px" width="8" height="6"><polygon points="0.5,0.5 7,0.5 3.75,5.5" fill="#e8e8e8"/></svg>
<div class="a" style="left:950px;top:128px;width:199px;height:126px;box-sizing:border-box;border:1px solid #f4f4f4;background:#444"></div>
<div class="a" style="left:951px;top:129px;width:20px;height:16px;background:#3b3b3b"></div>
<div class="a" style="left:971px;top:129px;width:177px;height:16px;background:#5b8bd0"></div>
<svg class="a" style="left:955px;top:132px" width="15" height="10" viewBox="0 0 15 10"><path d="M0.3,5 Q7.5,-2.6 14.7,5 Q7.5,12.2 0.3,5 Z" fill="#2c2c2c"/></svg>
<div class="a" style="left:951px;top:145px;width:197px;height:1px;background:#7e7e7e"></div>
<div class="t" style="left:993px;top:131px;color:#f4f4f4">TurboSmooth</div>
<div class="a" style="left:951px;top:162px;width:197px;height:1px;background:#7e7e7e"></div>
<svg class="a" style="left:955px;top:149px" width="15" height="10" viewBox="0 0 15 10"><path d="M0.3,5 Q7.5,-2.6 14.7,5 Q7.5,12.2 0.3,5 Z" fill="#d6d6d6"/><circle cx="7.5" cy="4.8" r="3.1" fill="#3a3a3a"/><circle cx="8.5" cy="3.7" r="0.9" fill="#d6d6d6"/></svg>
<svg class="a" style="left:978px;top:150px" width="7" height="9"><polygon points="0.3,0.5 6.2,4.3 0.3,8.2" fill="#d0d0d0"/></svg>
<div class="t" style="left:993px;top:148px;color:#f4f4f4">Symmetry</div>
<div class="a" style="left:951px;top:179px;width:197px;height:1px;background:#7e7e7e"></div>
<svg class="a" style="left:955px;top:166px" width="15" height="10" viewBox="0 0 15 10"><path d="M0.3,5 Q7.5,-2.6 14.7,5 Q7.5,12.2 0.3,5 Z" fill="#d6d6d6"/><circle cx="7.5" cy="4.8" r="3.1" fill="#3a3a3a"/><circle cx="8.5" cy="3.7" r="0.9" fill="#d6d6d6"/></svg>
<svg class="a" style="left:978px;top:167px" width="7" height="9"><polygon points="0.3,0.5 6.2,4.3 0.3,8.2" fill="#d0d0d0"/></svg>
<div class="t" style="left:993px;top:165px;color:#f4f4f4">Edit Poly</div>
<div class="a" style="left:951px;top:196px;width:197px;height:1px;background:#7e7e7e"></div>
<svg class="a" style="left:955px;top:183px" width="15" height="10" viewBox="0 0 15 10"><path d="M0.3,5 Q7.5,-2.6 14.7,5 Q7.5,12.2 0.3,5 Z" fill="#d6d6d6"/><circle cx="7.5" cy="4.8" r="3.1" fill="#3a3a3a"/><circle cx="8.5" cy="3.7" r="0.9" fill="#d6d6d6"/></svg>
<svg class="a" style="left:978px;top:184px" width="7" height="9"><polygon points="0.3,0.5 6.2,4.3 0.3,8.2" fill="#d0d0d0"/></svg>
<div class="t" style="left:993px;top:182px;color:#f4f4f4">Symmetry</div>
<div class="a" style="left:951px;top:213px;width:197px;height:1px;background:#7e7e7e"></div>
<svg class="a" style="left:955px;top:200px" width="15" height="10" viewBox="0 0 15 10"><path d="M0.3,5 Q7.5,-2.6 14.7,5 Q7.5,12.2 0.3,5 Z" fill="#d6d6d6"/><circle cx="7.5" cy="4.8" r="3.1" fill="#3a3a3a"/><circle cx="8.5" cy="3.7" r="0.9" fill="#d6d6d6"/></svg>
<svg class="a" style="left:978px;top:201px" width="7" height="9"><polygon points="0.3,0.5 6.2,4.3 0.3,8.2" fill="#d0d0d0"/></svg>
<div class="t" style="left:993px;top:199px;color:#f4f4f4">Edit Poly</div>
<div class="a" style="left:951px;top:230px;width:197px;height:1px;background:#7e7e7e"></div>
<svg class="a" style="left:955px;top:217px" width="15" height="10" viewBox="0 0 15 10"><path d="M0.3,5 Q7.5,-2.6 14.7,5 Q7.5,12.2 0.3,5 Z" fill="#d6d6d6"/><circle cx="7.5" cy="4.8" r="3.1" fill="#3a3a3a"/><circle cx="8.5" cy="3.7" r="0.9" fill="#d6d6d6"/></svg>
<div class="t" style="left:993px;top:216px;color:#f4f4f4">Spherify</div>
<div class="a" style="left:951px;top:247px;width:197px;height:1px;background:#7e7e7e"></div>
<div class="t" style="left:972px;top:233px;color:#f4f4f4">Box</div>
<div class="a" style="left:986px;top:261px;width:22px;height:22px;border-radius:3px;background:#5b8bd0"></div>
<div class="sep" style="left:979px;top:264px"></div>
<div class="sep" style="left:1015px;top:264px"></div>
<div class="sep" style="left:1075px;top:264px"></div>
<svg class="a" style="left:950px;top:260px" width="160" height="26">
<g fill="#d2d2d2"><polygon points="12.0,7.6 14.6,5.4 17.6,8.6 15.4,11"/><polygon points="12.6,8.6 14.6,10.6 13.2,12.4 10.8,10"/><polygon points="9.0,10.4 10.4,9.2 14.0,12.8 12.8,14.4"/><line x1="10.8" y1="13.0" x2="5.2" y2="18.3" stroke="#d2d2d2" stroke-width="1.4"/></g>
<g><rect x="44.5" y="6" width="7" height="13.5" rx="2.5" fill="#d8d8d8" stroke="#23395c" stroke-width="1"/><rect x="43.3" y="5.3" width="9.4" height="2.2" rx="1" fill="#e8e8e8" stroke="#23395c" stroke-width="0.7"/><rect x="46.3" y="8" width="3.4" height="9.6" rx="1.5" fill="#6ed3c3"/></g>
<g fill="#666" stroke="#363636" stroke-width="1"><circle cx="79.5" cy="7.5" r="3.6"/><circle cx="82.5" cy="15.5" r="3.8"/><circle cx="87.5" cy="15" r="3.6" fill="#555"/><path d="M84,6.5 h5.5 v4.5 M87.6,9 l2,2.2 l2,-2.2" fill="none"/></g>
<g stroke="#d0d0d0" stroke-width="1.1" fill="none"><rect x="103" y="8.5" width="8" height="10.5" rx="0.8"/><line x1="101.5" y1="7.3" x2="112.5" y2="7.3"/><path d="M105,7 v-1.7 h4 v1.7"/><line x1="105.6" y1="10" x2="105.6" y2="17.5"/><line x1="108.4" y1="10" x2="108.4" y2="17.5"/></g>
<g><rect x="136" y="5" width="13" height="14" fill="#d4d4d4"/><rect x="137.2" y="7.6" width="10.6" height="10.2" fill="#444"/><rect x="138" y="8.4" width="3.8" height="3.6" fill="#d4d4d4"/><rect x="143.2" y="8.4" width="3.8" height="3.6" fill="#d4d4d4"/><rect x="138" y="13.4" width="3.8" height="3.6" fill="#d4d4d4"/><rect x="143.2" y="13.4" width="3.8" height="3.6" fill="#d4d4d4"/><rect x="139.1" y="9.5" width="1.6" height="1.5" fill="#444"/><rect x="144.3" y="14.5" width="1.6" height="1.5" fill="#444"/><rect x="139.1" y="14.5" width="1.6" height="1.5" fill="#444"/><line x1="142.3" y1="12.3" x2="149.5" y2="5" stroke="#f0a820" stroke-width="2.3"/></g>
</svg>
<div class="a" style="left:954px;top:309px;width:88px;height:1px;background:#5e5e5e"></div>
<div class="a" style="left:1056px;top:309px;width:89px;height:1px;background:#5e5e5e"></div>
<svg class="a" style="left:1042px;top:308px" width="14" height="4"><g fill="#cfcfcf"><rect x="0" y="0" width="1" height="1"/><rect x="0" y="2" width="1" height="1"/><rect x="2" y="0" width="1" height="1"/><rect x="2" y="2" width="1" height="1"/><rect x="4" y="0" width="1" height="1"/><rect x="4" y="2" width="1" height="1"/><rect x="6" y="0" width="1" height="1"/><rect x="6" y="2" width="1" height="1"/><rect x="8" y="0" width="1" height="1"/><rect x="8" y="2" width="1" height="1"/><rect x="10" y="0" width="1" height="1"/><rect x="10" y="2" width="1" height="1"/><rect x="12" y="0" width="1" height="1"/><rect x="12" y="2" width="1" height="1"/></g></svg>
<div class="a" style="left:1144px;top:317px;width:5px;height:439px;border-radius:3px;background:#3d3d3d"></div>
<div class="a" style="left:949px;top:317px;width:192px;height:331px;border-radius:3px;background:#515151"></div>
<svg class="a" style="left:955px;top:324px" width="7" height="5"><polygon points="0,0 6.4,0 3.2,4.6" fill="#c4c4c4"/></svg>
<div class="t" style="left:968px;top:320px;font-weight:bold;font-size:12px;letter-spacing:-0.1px;color:#f2f2f2">TurboSmooth</div>
<svg class="a" style="left:1128px;top:323px" width="6" height="6"><g fill="#7a7a7a"><rect x="0" y="0" width="1" height="1"/><rect x="0" y="2" width="1" height="1"/><rect x="0" y="4" width="1" height="1"/><rect x="2" y="0" width="1" height="1"/><rect x="2" y="2" width="1" height="1"/><rect x="2" y="4" width="1" height="1"/><rect x="4" y="0" width="1" height="1"/><rect x="4" y="2" width="1" height="1"/><rect x="4" y="4" width="1" height="1"/></g></svg>
<div class="gb" style="left:969px;top:343px;width:153px;height:102px"></div>
<div class="gl" style="left:970px;top:336px">Main</div>
<div class="gb" style="left:969px;top:454px;width:153px;height:86px"></div>
<div class="gl" style="left:970px;top:447px">Surface Parameters</div>
<div class="gb" style="left:969px;top:548px;width:153px;height:92px"></div>
<div class="gl" style="left:970px;top:541px">Update Options</div>
<div class="t" style="left:958px;width:101px;text-align:right;top:355px;letter-spacing:0.2px">Iterations:</div>
<div class="a" style="left:1066px;top:353px;width:49px;height:14px;background:#646464;border-radius:1px"></div>
<div class="t" style="left:1070px;top:354px;color:#f0f0f0">1</div>
<svg class="a" style="left:1106px;top:355px" width="7" height="11"><polygon points="3.2,0.3 6,4 0.4,4" fill="#e0e0e0"/><polygon points="0.4,6.6 6,6.6 3.2,10.3" fill="#e0e0e0"/></svg>
<div class="cb" style="left:980px;top:377px"></div>
<div class="t" style="left:996px;top:377px;letter-spacing:0.1px">Render Iters:</div>
<div class="a" style="left:1066px;top:376px;width:49px;height:14px;background:#595959;border-radius:1px"></div>
<div class="t" style="left:1070px;top:377px;color:#8a8a8a">0</div>
<svg class="a" style="left:1106px;top:378px" width="7" height="11"><polygon points="3.2,0.3 6,4 0.4,4" fill="#858585"/><polygon points="0.4,6.6 6,6.6 3.2,10.3" fill="#858585"/></svg>
<div class="cb" style="left:980px;top:405px"></div>
<div class="t" style="left:996px;top:405px">Isoline Display</div>
<div class="cb" style="left:980px;top:426px"></div>
<div class="t" style="left:996px;top:426px">Explicit Normals</div>
<div class="cb" style="left:981px;top:466px"></div>
<svg class="a" style="left:981px;top:466px" width="12" height="12"><path d="M2.2,6.2 L4.6,9.2 L10,2.6" stroke="#f0f0f0" stroke-width="1.9" fill="none"/></svg>
<div class="t" style="left:997px;top:465px">Smooth Result</div>
<div class="t" style="left:978px;top:481px">Separate by:</div>
<div class="cb" style="left:1011px;top:499px"></div>
<div class="t" style="left:1027px;top:499px">Materials</div>
<div class="cb" style="left:1011px;top:517px"></div>
<div class="t" style="left:1027px;top:517px">Smoothing Groups</div>
<div class="rb" style="left:986px;top:558px"></div>
<div class="a" style="left:989px;top:561px;width:8px;height:8px;border-radius:4px;background:#e4e4e4"></div>
<div class="t" style="left:1003px;top:559px">Always</div>
<div class="rb" style="left:986px;top:574px"></div>
<div class="t" style="left:1003px;top:575px">When Rendering</div>
<div class="rb" style="left:986px;top:591px"></div>
<div class="t" style="left:1003px;top:592px">Manually</div>
<div class="a" style="left:997px;top:612px;width:94px;height:18px;border-radius:3px;background:#646464"></div>
<div class="t" style="left:997px;width:94px;text-align:center;top:615px;color:#dcdcdc">Update</div>
<div class="a" style="left:0;top:784px;width:1196px;height:37px;background:#2b2b2b"></div>
<div class="a" style="left:0;top:809px;width:1196px;height:1px;background:#3c3c3c"></div>
<svg class="a" style="left:0;top:784px" width="1196" height="37"><g stroke="#aaaaaa" stroke-width="1"><line x1="9.5" y1="0" x2="9.5" y2="12"/><line x1="27.5" y1="0" x2="27.5" y2="12"/><line x1="44.5" y1="0" x2="44.5" y2="12"/><line x1="62.5" y1="0" x2="62.5" y2="25"/><line x1="80.5" y1="0" x2="80.5" y2="12"/><line x1="97.5" y1="0" x2="97.5" y2="12"/><line x1="115.5" y1="0" x2="115.5" y2="12"/><line x1="132.5" y1="0" x2="132.5" y2="12"/><line x1="150.5" y1="0" x2="150.5" y2="25"/><line x1="168.5" y1="0" x2="168.5" y2="12"/><line x1="185.5" y1="0" x2="185.5" y2="12"/><line x1="203.5" y1="0" x2="203.5" y2="12"/><line x1="221.5" y1="0" x2="221.5" y2="12"/><line x1="238.5" y1="0" x2="238.5" y2="25"/><line x1="256.5" y1="0" x2="256.5" y2="12"/><line x1="273.5" y1="0" x2="273.5" y2="12"/><line x1="291.5" y1="0" x2="291.5" y2="12"/><line x1="309.5" y1="0" x2="309.5" y2="12"/><line x1="326.5" y1="0" x2="326.5" y2="25"/><line x1="344.5" y1="0" x2="344.5" y2="12"/><line x1="362.5" y1="0" x2="362.5" y2="12"/><line x1="379.5" y1="0" x2="379.5" y2="12"/><line x1="397.5" y1="0" x2="397.5" y2="12"/><line x1="414.5" y1="0" x2="414.5" y2="25"/><line x1="432.5" y1="0" x2="432.5" y2="12"/><line x1="450.5" y1="0" x2="450.5" y2="12"/><line x1="467.5" y1="0" x2="467.5" y2="12"/><line x1="485.5" y1="0" x2="485.5" y2="12"/><line x1="503.5" y1="0" x2="503.5" y2="25"/><line x1="520.5" y1="0" x2="520.5" y2="12"/><line x1="538.5" y1="0" x2="538.5" y2="12"/><line x1="556.5" y1="0" x2="556.5" y2="12"/><line x1="573.5" y1="0" x2="573.5" y2="12"/><line x1="591.5" y1="0" x2="591.5" y2="25"/><line x1="608.5" y1="0" x2="608.5" y2="12"/><line x1="626.5" y1="0" x2="626.5" y2="12"/><line x1="644.5" y1="0" x2="644.5" y2="12"/><line x1="661.5" y1="0" x2="661.5" y2="12"/><line x1="679.5" y1="0" x2="679.5" y2="25"/><line x1="697.5" y1="0" x2="697.5" y2="12"/><line x1="714.5" y1="0" x2="714.5" y2="12"/><line x1="732.5" y1="0" x2="732.5" y2="12"/><line x1="749.5" y1="0" x2="749.5" y2="12"/><line x1="767.5" y1="0" x2="767.5" y2="25"/><line x1="785.5" y1="0" x2="785.5" y2="12"/><line x1="802.5" y1="0" x2="802.5" y2="12"/><line x1="820.5" y1="0" x2="820.5" y2="12"/><line x1="838.5" y1="0" x2="838.5" y2="12"/><line x1="855.5" y1="0" x2="855.5" y2="25"/><line x1="873.5" y1="0" x2="873.5" y2="12"/><line x1="891.5" y1="0" x2="891.5" y2="12"/><line x1="908.5" y1="0" x2="908.5" y2="12"/><line x1="926.5" y1="0" x2="926.5" y2="12"/><line x1="943.5" y1="0" x2="943.5" y2="25"/><line x1="961.5" y1="0" x2="961.5" y2="12"/><line x1="979.5" y1="0" x2="979.5" y2="12"/><line x1="996.5" y1="0" x2="996.5" y2="12"/><line x1="1014.5" y1="0" x2="1014.5" y2="12"/><line x1="1032.5" y1="0" x2="1032.5" y2="25"/><line x1="1049.5" y1="0" x2="1049.5" y2="12"/><line x1="1067.5" y1="0" x2="1067.5" y2="12"/><line x1="1084.5" y1="0" x2="1084.5" y2="12"/><line x1="1102.5" y1="0" x2="1102.5" y2="12"/><line x1="1120.5" y1="0" x2="1120.5" y2="25"/><line x1="1137.5" y1="0" x2="1137.5" y2="12"/><line x1="1155.5" y1="0" x2="1155.5" y2="12"/><line x1="1173.5" y1="0" x2="1173.5" y2="12"/><line x1="1190.5" y1="0" x2="1190.5" y2="12"/></g><text x="62.7" y="22.5" font-size="10.5" fill="#cfcfcf" text-anchor="middle" font-family="Liberation Sans" style="paint-order:stroke" >30</text><text x="150.8" y="22.5" font-size="10.5" fill="#cfcfcf" text-anchor="middle" font-family="Liberation Sans" style="paint-order:stroke" >35</text><text x="239.0" y="22.5" font-size="10.5" fill="#cfcfcf" text-anchor="middle" font-family="Liberation Sans" style="paint-order:stroke" >40</text><text x="327.1" y="22.5" font-size="10.5" fill="#cfcfcf" text-anchor="middle" font-family="Liberation Sans" style="paint-order:stroke" >45</text><text x="415.3" y="22.5" font-size="10.5" fill="#cfcfcf" text-anchor="middle" font-family="Liberation Sans" style="paint-order:stroke" >50</text><text x="503.4" y="22.5" font-size="10.5" fill="#cfcfcf" text-anchor="middle" font-family="Liberation Sans" style="paint-order:stroke" >55</text><text x="591.6" y="22.5" font-size="10.5" fill="#cfcfcf" text-anchor="middle" font-family="Liberation Sans" style="paint-order:stroke" >60</text><text x="679.7" y="22.5" font-size="10.5" fill="#cfcfcf" text-anchor="middle" font-family="Liberation Sans" style="paint-order:stroke" >65</text><text x="767.9" y="22.5" font-size="10.5" fill="#cfcfcf" text-anchor="middle" font-family="Liberation Sans" style="paint-order:stroke" >70</text><text x="856.0" y="22.5" font-size="10.5" fill="#cfcfcf" text-anchor="middle" font-family="Liberation Sans" style="paint-order:stroke" >75</text><text x="944.2" y="22.5" font-size="10.5" fill="#cfcfcf" text-anchor="middle" font-family="Liberation Sans" style="paint-order:stroke" >80</text><text x="1032.3" y="22.5" font-size="10.5" fill="#cfcfcf" text-anchor="middle" font-family="Liberation Sans" style="paint-order:stroke" >85</text><text x="1120.5" y="22.5" font-size="10.5" fill="#cfcfcf" text-anchor="middle" font-family="Liberation Sans" style="paint-order:stroke" >90</text></svg>
<div class="a" style="left:455px;top:828px;width:21px;height:3px;border-radius:2px 2px 0 0;background:#5b8bd0"></div>
<div class="a" style="left:1030px;top:829px;width:42px;height:2px;border-radius:2px 2px 0 0;background:#5c5c5c"></div>
<div class="a" style="left:1077px;top:829px;width:46px;height:2px;border-radius:2px 2px 0 0;background:#5c5c5c"></div>
<div class="a" style="left:1128px;top:829px;width:68px;height:2px;border-radius:2px 2px 0 0;background:#5c5c5c"></div>
<svg class="a" style="left:0;top:0;pointer-events:none" width="1196" height="831"><line x1="955.5" y1="153.8" x2="386" y2="223" stroke="#de1212" stroke-width="3.2"/><polygon points="374,224.6 388.8,217.6 389.8,228.2" fill="#ee1111"/></svg>
</body></html>
